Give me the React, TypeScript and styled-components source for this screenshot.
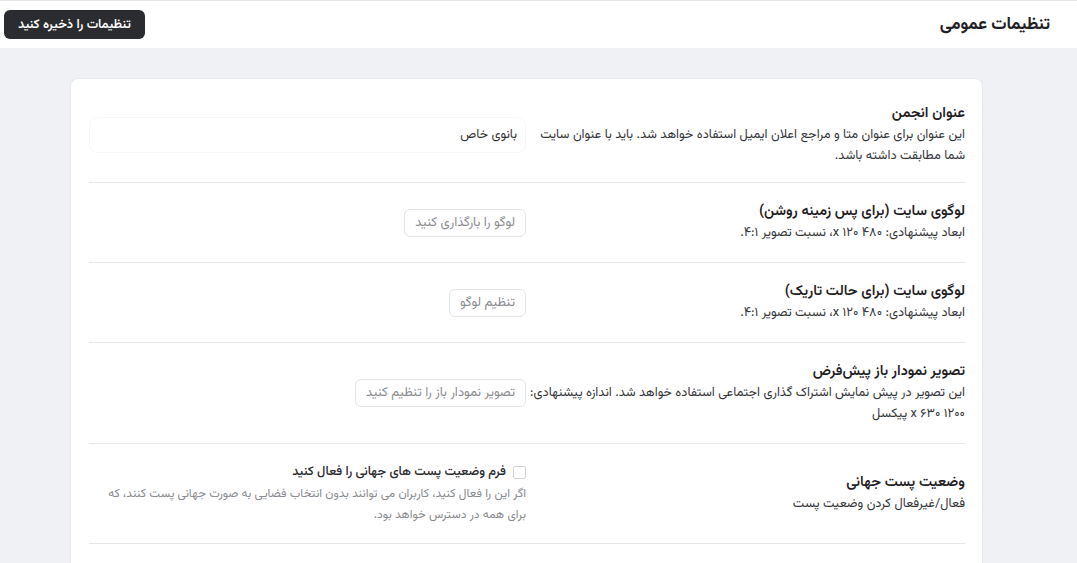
import styled, { createGlobalStyle } from 'styled-components';

// styles
const GlobalStyle = createGlobalStyle`
  html, body {
    margin: 0;
    padding: 0;
    background: #f0f1f4;
  }
  body {
    font-family: Vazirmatn, "Noto Sans Arabic", "DejaVu Sans", sans-serif;
    color: #222;
  }
`;

const Page = styled.div`
  direction: rtl;
  min-height: 563px;
  background: #f0f1f4;
`;

const Header = styled.header`
  height: 47px;
  border-top: 1px solid #e6e7ea;
  background: #fff;
  display: flex;
  align-items: center;
  justify-content: space-between;
  padding: 0 27px 0 4px;
`;

const PageTitle = styled.h1`
  margin: 0;
  font-size: 17px;
  font-weight: 700;
  color: #1f2024;
`;

const SaveButton = styled.button`
  font-family: inherit;
  font-size: 12.8px;
  font-weight: 600;
  color: #fff;
  background: #2a2c30;
  border: none;
  border-radius: 6px;
  height: 29px;
  padding: 0 14px;
  cursor: pointer;
`;

const Main = styled.main`
  padding: 30px 94px 0 70px;
`;

const Card = styled.section`
  background: #fff;
  border: 1px solid #e8e9ec;
  border-bottom: none;
  border-radius: 8px 8px 0 0;
  padding: 8px 17px 20px 18px;
`;

const Row = styled.div<{ $height: number }>`
  display: grid;
  grid-template-columns: 439px 1fr;
  align-items: center;
  min-height: ${p => p.$height}px;
  border-bottom: 1px solid #e7e7e9;
`;

const Label = styled.div`
  display: flex;
  flex-direction: column;
`;

const Title = styled.div`
  font-size: 14.5px;
  font-weight: 600;
  line-height: 22px;
  color: #1f2024;
`;

const Desc = styled.div`
  font-size: 12.8px;
  line-height: 21px;
  color: #35363a;
`;

const Control = styled.div`
  display: flex;
  flex-direction: column;
  align-items: flex-start;
`;

const TextInput = styled.input`
  direction: rtl;
  box-sizing: border-box;
  width: 437px;
  height: 36px;
  margin-left: 2px;
  border: 1px solid #f7f7f8;
  border-radius: 8px;
  padding: 0 8px;
  font-family: inherit;
  font-size: 12.8px;
  color: #333;
  background: #fff;
  outline: none;
`;

const GhostButton = styled.button`
  font-family: inherit;
  font-size: 13px;
  color: #8b8c90;
  background: #fff;
  border: 1px solid #e3e4e7;
  border-radius: 6px;
  height: 28px;
  padding: 0 10px;
  cursor: pointer;
`;

const CheckLine = styled.label`
  display: flex;
  align-items: center;
  gap: 7px;
  font-size: 12.8px;
  font-weight: 500;
  color: #2a2b2f;
  line-height: 22px;
`;

const Box = styled.span`
  width: 11px;
  height: 11px;
  border: 1px solid #d3d4d8;
  border-radius: 2px;
  background: #fff;
`;

const Help = styled.div`
  font-size: 12px;
  line-height: 21px;
  color: #8a8b8f;
  margin-top: 1px;
`;

// component
export default function App() {
  return (
    <Page>
      <GlobalStyle />
      <Header>
        <PageTitle>تنظیمات عمومی</PageTitle>
        <SaveButton>تنظیمات را ذخیره کنید</SaveButton>
      </Header>
      <Main>
        <Card>
          <Row $height={95}>
            <Label>
              <Title>عنوان انجمن</Title>
              <Desc>این عنوان برای عنوان متا و مراجع اعلان ایمیل استفاده خواهد شد. باید با عنوان سایت شما مطابقت داشته باشد.</Desc>
            </Label>
            <Control>
              <TextInput defaultValue="بانوی خاص" />
            </Control>
          </Row>

          <Row $height={79}>
            <Label>
              <Title>لوگوی سایت (برای پس زمینه روشن)</Title>
              <Desc>ابعاد پیشنهادی: ۴۸۰ x ۱۲۰، نسبت تصویر ۴:۱.</Desc>
            </Label>
            <Control>
              <GhostButton>لوگو را بارگذاری کنید</GhostButton>
            </Control>
          </Row>

          <Row $height={79}>
            <Label>
              <Title>لوگوی سایت (برای حالت تاریک)</Title>
              <Desc>ابعاد پیشنهادی: ۴۸۰ x ۱۲۰، نسبت تصویر ۴:۱.</Desc>
            </Label>
            <Control>
              <GhostButton>تنظیم لوگو</GhostButton>
            </Control>
          </Row>

          <Row $height={100}>
            <Label>
              <Title>تصویر نمودار باز پیش‌فرض</Title>
              <Desc>این تصویر در پیش نمایش اشتراک گذاری اجتماعی استفاده خواهد شد. اندازه پیشنهادی: ۱۲۰۰ x ۶۳۰ پیکسل</Desc>
            </Label>
            <Control>
              <GhostButton>تصویر نمودار باز را تنظیم کنید</GhostButton>
            </Control>
          </Row>

          <Row $height={99}>
            <Label>
              <Title>وضعیت پست جهانی</Title>
              <Desc>فعال/غیرفعال کردن وضعیت پست</Desc>
            </Label>
            <Control>
              <CheckLine>
                <Box />
                فرم وضعیت پست های جهانی را فعال کنید
              </CheckLine>
              <Help>اگر این را فعال کنید، کاربران می توانند بدون انتخاب فضایی به صورت جهانی پست کنند، که برای همه در دسترس خواهد بود.</Help>
            </Control>
          </Row>
        </Card>
      </Main>
    </Page>
  );
}
